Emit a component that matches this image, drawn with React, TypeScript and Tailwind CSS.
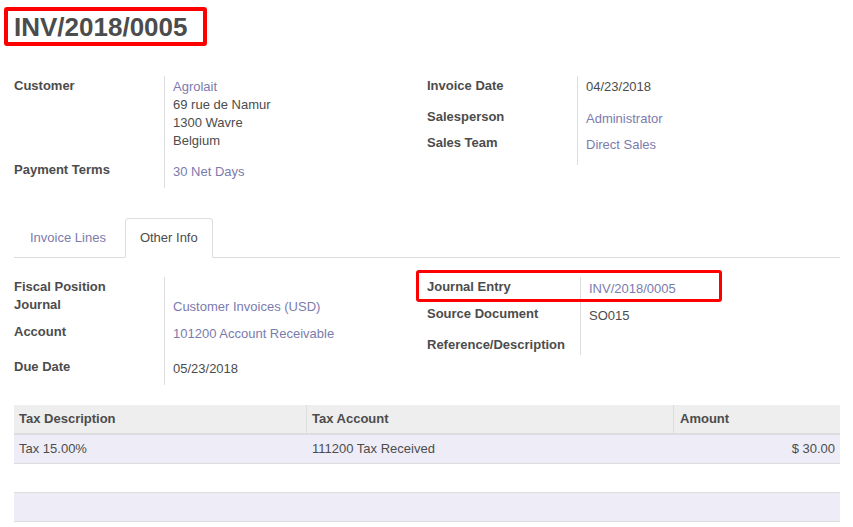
import React from "react";

const LINK = "text-[#7c7bad]";

function Cell({ pt, children, value }: { pt: string; children?: React.ReactNode; value?: boolean }) {
  return (
    <div className={`${pt} ${value ? "border-l border-[#dddddd] pl-[8px]" : ""} leading-[18px]`}>{children}</div>
  );
}

export default function App() {
  return (
    <div
      className="w-[853px] h-[527px] bg-white text-[13px] text-[#4c4c4c] overflow-hidden pl-[14px] pr-[13px]"
      style={{ fontFamily: '"Liberation Sans", Arial, sans-serif' }}
    >
      {/* Title */}
      <div className="mt-[7px] -ml-[10px] w-[203px] h-[39px] border-[4px] border-[#ff0000] rounded-[3px] flex items-center pl-[6px]">
        <h1 className="text-[26px] font-bold leading-[31px] pt-[1px] text-[#4c4c4c]">INV/2018/0005</h1>
      </div>

      {/* Top groups */}
      <div className="mt-[30px] grid grid-cols-2">
        <div className="grid grid-cols-[150px_1fr] font-normal">
          <Cell pt="pt-[1px] h-[77px] font-bold">Customer</Cell>
          <Cell pt="pt-[2px] h-[77px]" value>
            <div className={LINK}>Agrolait</div>
            <div>69 rue de Namur</div>
            <div>1300 Wavre</div>
            <div>Belgium</div>
          </Cell>
          <Cell pt="pt-[8px] h-[35px] font-bold">Payment Terms</Cell>
          <Cell pt="pt-[10px] h-[35px]" value>
            <span className={LINK}>30 Net Days</span>
          </Cell>
        </div>
        <div className="grid grid-cols-[150px_1fr] content-start">
          <Cell pt="pt-[1px] h-[27px] font-bold">Invoice Date</Cell>
          <Cell pt="pt-[2px] h-[27px]" value>04/23/2018</Cell>
          <Cell pt="pt-[5px] h-[26px] font-bold">Salesperson</Cell>
          <Cell pt="pt-[7px] h-[26px]" value>
            <span className={LINK}>Administrator</span>
          </Cell>
          <Cell pt="pt-[5px] h-[36px] font-bold">Sales Team</Cell>
          <Cell pt="pt-[7px] h-[36px]" value>
            <span className={LINK}>Direct Sales</span>
          </Cell>
        </div>
      </div>

      {/* Tabs */}
      <div className="mt-[30px] flex border-b border-[#dddddd] h-[40px]">
        <div className={`h-[40px] px-[15px] border border-transparent flex items-center mr-[3px] ${LINK}`}>Invoice Lines</div>
        <div className="h-[40px] -mb-px pl-[14px] pr-[14px] border border-[#dddddd] border-b-white bg-white rounded-t-[4px] flex items-center">
          Other Info
        </div>
      </div>

      {/* Other info groups */}
      <div className="mt-[19px] grid grid-cols-2">
        <div className="grid grid-cols-[150px_1fr] content-start">
          <Cell pt="pt-[1px] h-[18px] font-bold">Fiscal Position</Cell>
          <Cell pt="pt-0 h-[18px]" value></Cell>
          <Cell pt="pt-[1px] h-[23px] font-bold">Journal</Cell>
          <Cell pt="pt-[3px] h-[23px]" value>
            <span className={LINK}>Customer Invoices (USD)</span>
          </Cell>
          <Cell pt="pt-[5px] h-[32px] font-bold">Account</Cell>
          <Cell pt="pt-[7px] h-[32px]" value>
            <span className={LINK}>101200 Account Receivable</span>
          </Cell>
          <Cell pt="pt-[8px] h-[35px] font-bold">Due Date</Cell>
          <Cell pt="pt-[10px] h-[35px]" value>05/23/2018</Cell>
        </div>
        <div className="relative grid grid-cols-[153px_1fr] content-start">
          <Cell pt="pt-[1px] h-[23px] font-bold">Journal Entry</Cell>
          <Cell pt="pt-[3px] h-[23px]" value>
            <span className={LINK}>INV/2018/0005</span>
          </Cell>
          <Cell pt="pt-[5px] h-[31px] font-bold">Source Document</Cell>
          <Cell pt="pt-[7px] h-[31px]" value>SO015</Cell>
          <Cell pt="pt-[5px] h-[24px] font-bold">Reference/Description</Cell>
          <Cell pt="pt-[4px] h-[24px]" value></Cell>
          <div className="absolute left-[-11px] top-[-7px] w-[306px] h-[32px] border-[3px] border-[#ff0000] rounded-[3px] pointer-events-none" />
        </div>
      </div>

      {/* Tax table */}
      <div className="mt-[20px]">
        <div className="grid grid-cols-[292px_367px_1fr] h-[30px] bg-[#eeeeee] border-b-2 border-[#dddddd] font-bold">
          <div className="px-[5px] flex items-center">Tax Description</div>
          <div className="px-[5px] flex items-center border-l border-[#dddddd]">Tax Account</div>
          <div className="px-[6px] flex items-center border-l border-[#dddddd]">Amount</div>
        </div>
        <div className="grid grid-cols-[292px_367px_1fr] h-[29px] bg-[#eeedf7] border-b border-[#dddddd]">
          <div className="px-[5px] flex items-center">Tax 15.00%</div>
          <div className="pl-[6px] pr-[5px] flex items-center">111200 Tax Received</div>
          <div className="px-[5px] flex items-center justify-end">$ 30.00</div>
        </div>
        <div className="h-[29px] bg-white border-b border-[#dddddd]" />
        <div className="h-[29px] bg-[#eeedf7] border-b border-[#dddddd]" />
      </div>
    </div>
  );
}
